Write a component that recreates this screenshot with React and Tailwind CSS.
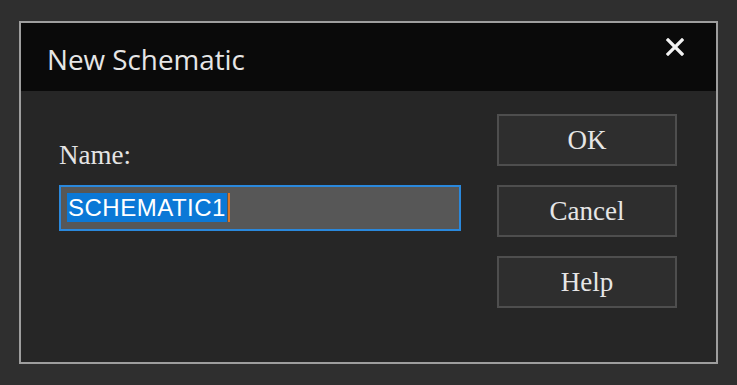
export default function App() {
  const serif = { fontFamily: '"Liberation Serif", "Times New Roman", serif' };
  return (
    <div className="w-[737px] h-[385px] bg-[#2f2f2f] pt-[21px] pl-[19px]">
      <div className="w-[699px] h-[343px] border-2 border-[#9e9e9e] bg-[#262626] flex flex-col">
        <div className="h-[68px] bg-[#0a0a0a] flex justify-between items-start shrink-0">
          <div
            className="pl-[26px] pt-[18px] text-[27.8px] leading-[37px] text-[#e6e6e6]"
            style={{ fontFamily: '"Open Sans", "Noto Sans", sans-serif' }}
          >
            New Schematic
          </div>
          <div className="pt-[15px] pr-[32px]">
            <svg width="18" height="18" viewBox="0 0 18 18">
              <path d="M2 2 L16 16 M16 2 L2 16" stroke="#f2f2f2" strokeWidth="3.2" strokeLinecap="square" />
            </svg>
          </div>
        </div>
        <div className="flex flex-1 pl-[38px] pr-[39px] pt-[23px]">
          <div className="flex flex-col flex-1">
            <div className="mt-[28px] text-[27px] leading-[26px] text-[#e4e4e4]" style={serif}>
              Name:
            </div>
            <div className="mt-[17px] w-[402px] h-[46px] border-2 border-[#2a88dc] bg-[#575757] pl-[6px] pt-[6px] flex items-start">
              <span
                className="bg-[#0b78d6] text-white text-[24px] leading-[29px] h-[29px] px-[1px] tracking-[0.5px]"
                style={{ fontFamily: '"Liberation Sans", Arial, sans-serif' }}
              >
                SCHEMATIC1
              </span>
              <span className="w-[2px] h-[29px] bg-[#d9782c] ml-[1px]" />
            </div>
          </div>
          <div className="flex flex-col gap-[19px] w-[180px]">
            {['OK', 'Cancel', 'Help'].map((t) => (
              <div
                key={t}
                className="h-[52px] border-2 border-[#4e4e4e] bg-[#2e2e2e] flex items-center justify-center text-[27px] leading-[26px] text-[#e6e6e6]"
                style={serif}
              >
                {t}
              </div>
            ))}
          </div>
        </div>
      </div>
    </div>
  );
}
